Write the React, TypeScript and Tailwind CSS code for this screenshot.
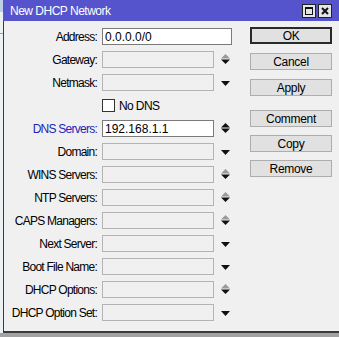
import React from "react";

type Arrow = "none" | "down" | "updown" | "updownOn";

const ROWS: { label: string; value?: string; arrow: Arrow; wide?: boolean; on?: boolean; blue?: boolean; check?: boolean }[] = [
  { label: "Address:", value: "0.0.0.0/0", arrow: "none", wide: true, on: true },
  { label: "Gateway:", arrow: "updown" },
  { label: "Netmask:", arrow: "down" },
  { label: "", arrow: "none", check: true },
  { label: "DNS Servers:", value: "192.168.1.1", arrow: "updownOn", on: true, blue: true },
  { label: "Domain:", arrow: "down" },
  { label: "WINS Servers:", arrow: "updown" },
  { label: "NTP Servers:", arrow: "updown" },
  { label: "CAPS Managers:", arrow: "updown" },
  { label: "Next Server:", arrow: "down" },
  { label: "Boot File Name:", arrow: "down" },
  { label: "DHCP Options:", arrow: "updown" },
  { label: "DHCP Option Set:", arrow: "down" },
];

function ArrowIcon({ kind }: { kind: Arrow }) {
  if (kind === "none") return null;
  if (kind === "down")
    return (
      <svg width="9" height="5" viewBox="0 0 9 5" className="ml-[7px] mt-[1px]">
        <polygon points="0,0 9,0 4.5,5" fill="#111" />
      </svg>
    );
  return (
    <svg width="9" height="10" viewBox="0 0 9 10" className="ml-[7px] -mt-[1px]">
      <polygon points="0,4.5 9,4.5 4.5,0" fill={kind === "updownOn" ? "#111" : "#9a9a9a"} />
      <polygon points="0,5.5 9,5.5 4.5,10" fill="#111" />
    </svg>
  );
}

function Btn({ children, primary }: { children: React.ReactNode; primary?: boolean }) {
  return (
    <div
      className={`h-[17px] w-[82px] flex items-center justify-center bg-[#e1e1e1] text-[12px] tracking-[-0.3px] text-black ${
        primary ? "border-2 border-[#2a2a2a]" : "border border-[#adadad]"
      }`}
    >
      {children}
    </div>
  );
}

export default function App() {
  return (
    <div
      className="w-[339px] h-[337px] bg-[#a2a2a2] overflow-hidden flex flex-col"
      style={{ fontFamily: '"Liberation Sans", Arial, sans-serif' }}
    >
      <div className="flex h-[333px]">
        {/* window behind */}
        <div className="w-[3px] flex flex-col bg-[#eef1f4]">
          <div className="h-[12px] bg-[#bcd0e6]" />
          <div className="h-[21px]" />
          <div className="h-px bg-[#9aa3ad]" />
        </div>

        <div className="flex-1 flex flex-col">
          {/* title bar */}
          <div className="h-[21px] bg-[#5654cc] flex items-center pl-[7px] pr-[7px]">
            <span className="text-white text-[12px] tracking-[-0.5px]">New DHCP Network</span>
            <div className="ml-auto flex gap-[2px]">
              <div className="w-[14px] h-[14px] bg-[#e6e6e6] border border-[#222] flex items-center justify-center">
                <div className="w-[8px] h-[8px] border border-[#111] border-t-2" />
              </div>
              <div className="w-[14px] h-[14px] bg-[#e6e6e6] border border-[#222] flex items-center justify-center">
                <svg width="8" height="8" viewBox="0 0 8 8">
                  <path d="M1 1 L7 7 M7 1 L1 7" stroke="#111" strokeWidth="2" />
                </svg>
              </div>
            </div>
          </div>

          {/* body */}
          <div className="flex-1 flex bg-[#f0f0f0] border-l border-b-2 border-[#3a3a3a]">
            <div className="flex flex-col pt-[4px] w-[245px]">
              {ROWS.map((r, i) => (
                <div key={i} className="h-[23px] flex items-center">
                  <div
                    className={`w-[93px] text-right text-[12px] tracking-[-0.75px] ${r.blue ? "text-[#2424b8]" : "text-black"}`}
                  >
                    {r.label}
                  </div>
                  {r.check ? (
                    <div className="ml-[5px] flex items-center">
                      <div className="w-[13px] h-[13px] bg-white border border-[#333]" />
                      <span className="ml-[4px] text-[12px] tracking-[-0.6px] text-black">No DNS</span>
                    </div>
                  ) : (
                    <>
                      <div
                        className={`ml-[5px] h-[17px] flex items-center pl-[2px] text-[12px] text-black ${
                          r.wide ? "w-[130px]" : "w-[112px]"
                        } ${r.on ? "bg-white border border-[#7a7a7a]" : "bg-[#f0f0f0] border border-[#b4b4b4]"}`}
                      >
                        {r.value}
                      </div>
                      <ArrowIcon kind={r.arrow} />
                    </>
                  )}
                </div>
              ))}
            </div>

            <div className="flex flex-col pt-[6px] ml-[1px]">
              <div className="flex flex-col gap-[9px]">
                <Btn primary>OK</Btn>
                <Btn>Cancel</Btn>
                <Btn>Apply</Btn>
              </div>
              <div className="flex flex-col gap-[8px] mt-[14px]">
                <Btn>Comment</Btn>
                <Btn>Copy</Btn>
                <Btn>Remove</Btn>
              </div>
            </div>
          </div>
        </div>
      </div>
    </div>
  );
}
